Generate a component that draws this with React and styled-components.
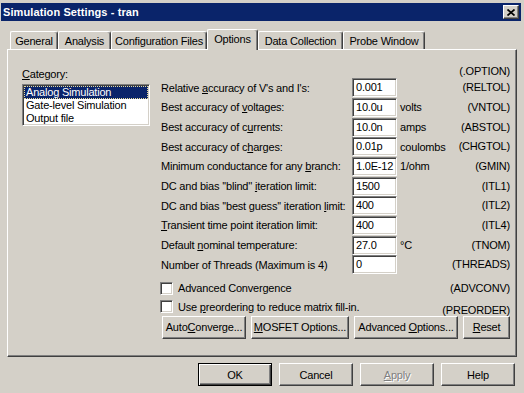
import React from 'react';
import styled, { createGlobalStyle } from 'styled-components';

const GlobalStyle = createGlobalStyle`
  html, body {
    margin: 0;
    padding: 0;
    background: #d4d0c8;
  }
  body {
    font-family: "Liberation Sans", Arial, sans-serif;
    font-size: 11px;
    letter-spacing: -0.2px;
    color: #000;
  }
`;

const Window = styled.div`
  width: 524px;
  height: 393px;
  box-sizing: border-box;
  padding: 3px 3px 0 1px;
  background: #d4d0c8;
  display: flex;
  flex-direction: column;
  overflow: hidden;
`;

const TitleBar = styled.div`
  height: 18px;
  background: #0a246a;
  display: flex;
  align-items: center;
  justify-content: space-between;
  padding: 0 2px;
`;

const TitleText = styled.span`
  color: #fff;
  font-weight: bold;
  font-size: 11px;
  letter-spacing: 0.1px;
`;

const CloseButton = styled.div`
  width: 16px;
  height: 14px;
  box-sizing: border-box;
  background: #d4d0c8;
  border: 1px solid;
  border-color: #fff #404040 #404040 #fff;
  box-shadow: inset -1px -1px #808080;
  display: flex;
  align-items: center;
  justify-content: center;
`;

const Body = styled.div`
  padding: 0 4px 0 6px;
  display: flex;
  flex-direction: column;
`;

const TabStrip = styled.div`
  margin-top: 8px;
  height: 20px;
  padding-left: 3px;
  display: flex;
  align-items: flex-end;
`;

const Tab = styled.div`
  position: relative;
  width: ${p => p.$w}px;
  height: ${p => (p.$selected ? 21 : 18)}px;
  margin-bottom: ${p => (p.$selected ? -1 : 0)}px;
  z-index: ${p => (p.$selected ? 2 : 1)};
  box-sizing: border-box;
  background: #d4d0c8;
  border-top: 1px solid #fff;
  border-left: 1px solid #fff;
  border-right: 1px solid #404040;
  border-radius: 2px 3px 0 0;
  box-shadow: inset -1px 0 #808080;
  display: flex;
  align-items: center;
  justify-content: center;
  padding-bottom: ${p => (p.$selected ? 2 : 0)}px;
  white-space: nowrap;
`;

const Panel = styled.div`
  height: 308px;
  box-sizing: border-box;
  border-top: 1px solid #fff;
  border-left: 1px solid #fff;
  border-right: 1px solid #404040;
  border-bottom: 1px solid #404040;
  box-shadow: inset -1px -1px #808080;
  padding: 14px 4px 0 14px;
  display: flex;
  gap: 11px;
`;

const LeftColumn = styled.div`
  width: 128px;
  padding-top: 4px;
  display: flex;
  flex-direction: column;
`;

const FieldLabel = styled.div`
  line-height: 13px;
`;

const U = styled.span`
  text-decoration: underline;
  text-underline-offset: 1px;
`;

const ListBox = styled.div`
  margin-top: 3px;
  height: 42px;
  box-sizing: border-box;
  background: #fff;
  border: 1px solid;
  border-color: #808080 #fff #fff #808080;
  box-shadow: inset 1px 1px #404040, inset -1px -1px #d4d0c8;
  padding: 1px;
`;

const ListItem = styled.div`
  height: 13px;
  line-height: 11px;
  box-sizing: border-box;
  padding-left: 1px;
  white-space: nowrap;
  background: ${p => (p.$selected ? '#0a246a' : 'transparent')};
  color: ${p => (p.$selected ? '#fff' : '#000')};
  border: 1px dotted ${p => (p.$selected ? '#e8dc9a' : 'transparent')};
`;

const RightColumn = styled.div`
  width: 349px;
  display: flex;
  flex-direction: column;
`;

const OptionHeader = styled.div`
  height: 14px;
  line-height: 14px;
  text-align: right;
`;

const Row = styled.div`
  height: 19.67px;
  display: grid;
  grid-template-columns: 191px 45px 1fr auto;
  align-items: center;
  white-space: nowrap;
`;

const Field = styled.div`
  height: 19px;
  box-sizing: border-box;
  background: #fff;
  border: 1px solid;
  border-color: #808080 #fff #fff #808080;
  box-shadow: inset 1px 1px #404040, inset -1px -1px #d4d0c8;
  padding: 0 0 0 3px;
  line-height: 17px;
  overflow: hidden;
  white-space: nowrap;
`;

const Unit = styled.span`
  padding-left: 3px;
`;

const Code = styled.span`
  text-align: right;
  align-self: ${p => (p.$drop ? 'start' : 'center')};
  padding-top: ${p => p.$drop || 0}px;
  line-height: 13px;
`;

const CheckRows = styled.div`
  margin-top: 5px;
  margin-left: -1px;
`;

const CheckRow = styled.div`
  height: 17px;
  display: grid;
  grid-template-columns: 13px 1fr auto;
  column-gap: 5px;
  align-items: center;
  white-space: nowrap;
`;

const CheckBox = styled.div`
  width: 13px;
  height: 13px;
  box-sizing: border-box;
  background: #fff;
  border: 1px solid;
  border-color: #808080 #fff #fff #808080;
  box-shadow: inset 1px 1px #404040, inset -1px -1px #d4d0c8;
`;

const ButtonRow = styled.div`
  margin-top: 2px;
  padding-left: 1px;
  display: flex;
  gap: 5px;
`;

const Button = styled.div`
  width: ${p => p.$w}px;
  height: 23px;
  box-sizing: border-box;
  background: #d4d0c8;
  border: 1px solid;
  border-color: ${p => (p.$default ? '#000' : '#fff #404040 #404040 #fff')};
  box-shadow: ${p =>
    p.$default
      ? 'inset 1px 1px #fff, inset -1px -1px #404040, inset -2px -2px #808080'
      : 'inset -1px -1px #808080'};
  display: flex;
  align-items: center;
  justify-content: center;
  white-space: nowrap;
  color: ${p => (p.$disabled ? '#808080' : '#000')};
  text-shadow: ${p => (p.$disabled ? '1px 1px 0 #fff' : 'none')};
`;

const DialogButtons = styled.div`
  margin-top: 6px;
  padding-right: 2px;
  display: flex;
  justify-content: flex-end;
  gap: 7px;
`;

const tabs = [
  { label: 'General', w: 48 },
  { label: 'Analysis', w: 53 },
  { label: 'Configuration Files', w: 96 },
  { label: 'Options', w: 51, selected: true },
  { label: 'Data Collection', w: 85 },
  { label: 'Probe Window', w: 82 },
];

const options = [
  { label: <>Relative <U>a</U>ccuracy of V's and I's:</>, value: '0.001', unit: '', code: '(RELTOL)' },
  { label: <>Best accuracy of <U>v</U>oltages:</>, value: '10.0u', unit: 'volts', code: '(VNTOL)' },
  { label: <>Best accuracy of c<U>u</U>rrents:</>, value: '10.0n', unit: 'amps', code: '(ABSTOL)' },
  { label: <>Best accuracy of c<U>h</U>arges:</>, value: '0.01p', unit: 'coulombs', code: '(CHGTOL)' },
  { label: <>Minimum conductance for any <U>b</U>ranch:</>, value: '1.0E-12', unit: '1/ohm', code: '(GMIN)' },
  { label: <>DC and bias ''blind'' <U>i</U>teration limit:</>, value: '1500', unit: '', code: '(ITL1)' },
  { label: <>DC and bias ''best guess'' iteration <U>l</U>imit:</>, value: '400', unit: '', code: '(ITL2)' },
  { label: <><U>T</U>ransient time point iteration limit:</>, value: '400', unit: '', code: '(ITL4)' },
  { label: <>Default <U>n</U>ominal temperature:</>, value: '27.0', unit: '°C', code: '(TNOM)' },
  { label: <>Number of Threads (Maximum is 4)</>, value: '0', unit: '', code: '(THREADS)' },
];

const CloseIcon = () => (
  <svg width="8" height="7" viewBox="0 0 8 7">
    <path d="M0.5 0.5 L7.5 6.5 M7.5 0.5 L0.5 6.5" stroke="#000" strokeWidth="1.7" fill="none" />
  </svg>
);

const App = () => (
  <Window>
    <GlobalStyle />
    <TitleBar>
      <TitleText>Simulation Settings - tran</TitleText>
      <CloseButton>
        <CloseIcon />
      </CloseButton>
    </TitleBar>
    <Body>
      <TabStrip>
        {tabs.map(t => (
          <Tab key={t.label} $w={t.w} $selected={t.selected}>
            {t.label}
          </Tab>
        ))}
      </TabStrip>
      <Panel>
        <LeftColumn>
          <FieldLabel>
            <U>C</U>ategory:
          </FieldLabel>
          <ListBox>
            <ListItem $selected>Analog Simulation</ListItem>
            <ListItem>Gate-level Simulation</ListItem>
            <ListItem>Output file</ListItem>
          </ListBox>
        </LeftColumn>
        <RightColumn>
          <OptionHeader>(.OPTION)</OptionHeader>
          {options.map(o => (
            <Row key={o.code}>
              <span>{o.label}</span>
              <Field>{o.value}</Field>
              <Unit>{o.unit}</Unit>
              <Code>{o.code}</Code>
            </Row>
          ))}
          <CheckRows>
            <CheckRow>
              <CheckBox />
              <span>Advanced Convergence</span>
              <Code>(ADVCONV)</Code>
            </CheckRow>
            <CheckRow>
              <CheckBox />
              <span>Use <U>p</U>reordering to reduce matrix fill-in.</span>
              <Code $drop={7}>(PREORDER)</Code>
            </CheckRow>
          </CheckRows>
          <ButtonRow>
            <Button $w={84}><span>Auto<U>C</U>onverge...</span></Button>
            <Button $w={98}><span><U>M</U>OSFET Options...</span></Button>
            <Button $w={104}><span>Advanced <U>O</U>ptions...</span></Button>
            <Button $w={47}><span><U>R</U>eset</span></Button>
          </ButtonRow>
        </RightColumn>
      </Panel>
      <DialogButtons>
        <Button $w={74} $default>OK</Button>
        <Button $w={74}>Cancel</Button>
        <Button $w={74} $disabled><span><U>A</U>pply</span></Button>
        <Button $w={74}>Help</Button>
      </DialogButtons>
    </Body>
  </Window>
);

export default App;
